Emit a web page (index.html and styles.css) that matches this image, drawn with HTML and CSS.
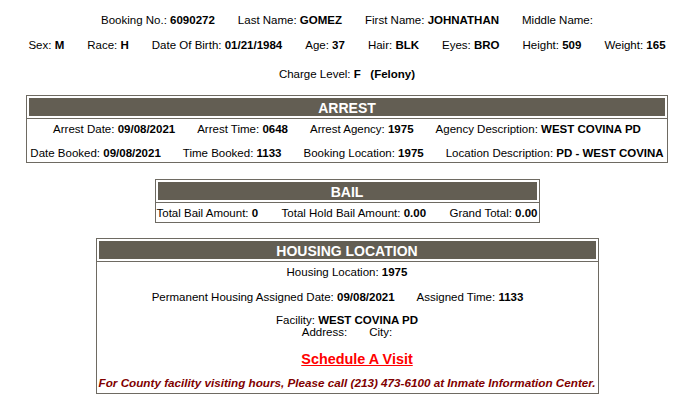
FILE: index.html
```html
<!DOCTYPE html>
<html>
<head>
<meta charset="utf-8">
<link rel="stylesheet" href="styles.css">
</head>
<body>
<div class="page">
  <div class="row row1">
    <span>Booking No.: <b>6090272</b></span>
    <span>Last Name: <b>GOMEZ</b></span>
    <span>First Name: <b>JOHNATHAN</b></span>
    <span>Middle Name: <b></b></span>
  </div>
  <div class="row row2">
    <span>Sex: <b>M</b></span>
    <span>Race: <b>H</b></span>
    <span>Date Of Birth: <b>01/21/1984</b></span>
    <span>Age: <b>37</b></span>
    <span>Hair: <b>BLK</b></span>
    <span>Eyes: <b>BRO</b></span>
    <span>Height: <b>509</b></span>
    <span>Weight: <b>165</b></span>
  </div>
  <div class="row charge">
    <span>Charge Level: <b>F</b>&nbsp;&nbsp; <b>(Felony)</b></span>
  </div>

  <div class="box arrest">
    <div class="head">ARREST</div>
    <div class="body">
      <div class="line">
        <span>Arrest Date: <b>09/08/2021</b></span>
        <span>Arrest Time: <b>0648</b></span>
        <span>Arrest Agency: <b>1975</b></span>
        <span>Agency Description: <b>WEST COVINA PD</b></span>
      </div>
      <div class="line">
        <span>Date Booked: <b>09/08/2021</b></span>
        <span>Time Booked: <b>1133</b></span>
        <span>Booking Location: <b>1975</b></span>
        <span>Location Description: <b>PD - WEST COVINA</b></span>
      </div>
    </div>
  </div>

  <div class="box bail">
    <div class="head">BAIL</div>
    <div class="body">
      <div class="line spread">
        <span>Total Bail Amount: <b>0</b></span>
        <span>Total Hold Bail Amount: <b>0.00</b></span>
        <span>Grand Total: <b>0.00</b></span>
      </div>
    </div>
  </div>

  <div class="box housing">
    <div class="head">HOUSING LOCATION</div>
    <div class="body">
      <div class="hline"><span>Housing Location: <b>1975</b></span></div>
      <div class="hline gapline">
        <span>Permanent Housing Assigned Date: <b>09/08/2021</b></span>
        <span>Assigned Time: <b>1133</b></span>
      </div>
      <div class="facility">Facility: <b>WEST COVINA PD</b></div>
      <div class="address"><span>Address:</span><span>City:</span></div>
      <div class="visit"><a href="#">Schedule A Visit</a></div>
      <div class="note">For County facility visiting hours, Please call (213) 473-6100 at Inmate Information Center.</div>
    </div>
  </div>
</div>
</body>
</html>
```
FILE: styles.css
```css
* { box-sizing: border-box; }
html, body { margin: 0; padding: 0; background: #fff; }
body {
  font-family: "Liberation Sans", Arial, sans-serif;
  font-size: 11.5px;
  color: #000;
}
b { font-weight: bold; }
span, b { white-space: nowrap; }
.page {
  display: flex;
  flex-direction: column;
  align-items: center;
  padding-top: 13px;
}
.row {
  display: flex;
  justify-content: center;
  gap: 23px;
  line-height: 14px;
}
.row2 { margin-top: 11px; }
.charge { margin-top: 15px; }

.box {
  border: 1px solid #6e6a62;
  padding: 1px;
  background: #fff;
}
.head {
  background: #635e53;
  color: #fff;
  font-weight: bold;
  font-size: 14px;
  text-align: center;
  height: 20px;
  line-height: 20px;
  border: 1px solid #fff;
}
.body {
  border: 1px solid #6e6a62;
  margin: 1px -2px -2px;
}
.arrest { margin-top: 14px; width: 642px; }
.arrest .body { padding: 3px 0 2px; }
.line {
  display: flex;
  justify-content: center;
  gap: 22px;
  line-height: 14px;
}
.line + .line { margin-top: 10px; }

.bail { margin-top: 16px; width: 385px; }
.bail .body { padding: 3px 1px 2px; }
.spread { justify-content: space-between; gap: 0; }

.housing { margin-top: 15px; width: 503px; }
.housing .body {
  padding: 3px 0 3px;
  text-align: center;
  line-height: 14px;
}
.hline { display: flex; justify-content: center; gap: 22px; }
.gapline { margin-top: 11px; padding-right: 19px; }
.facility { margin-top: 10px; line-height: 12px; white-space: nowrap; }
.address { display: flex; justify-content: center; gap: 22px; line-height: 12px; }
.visit { margin-top: 12px; padding-left: 20px; font-size: 14.4px; font-weight: bold; line-height: 18px; }
.visit a { color: #ff0000; text-decoration: underline; }
.note {
  margin-top: 8px;
  color: #800000;
  font-style: italic;
  font-weight: bold;
  font-size: 11.7px;
  line-height: 14px;
  white-space: nowrap;
}
```
